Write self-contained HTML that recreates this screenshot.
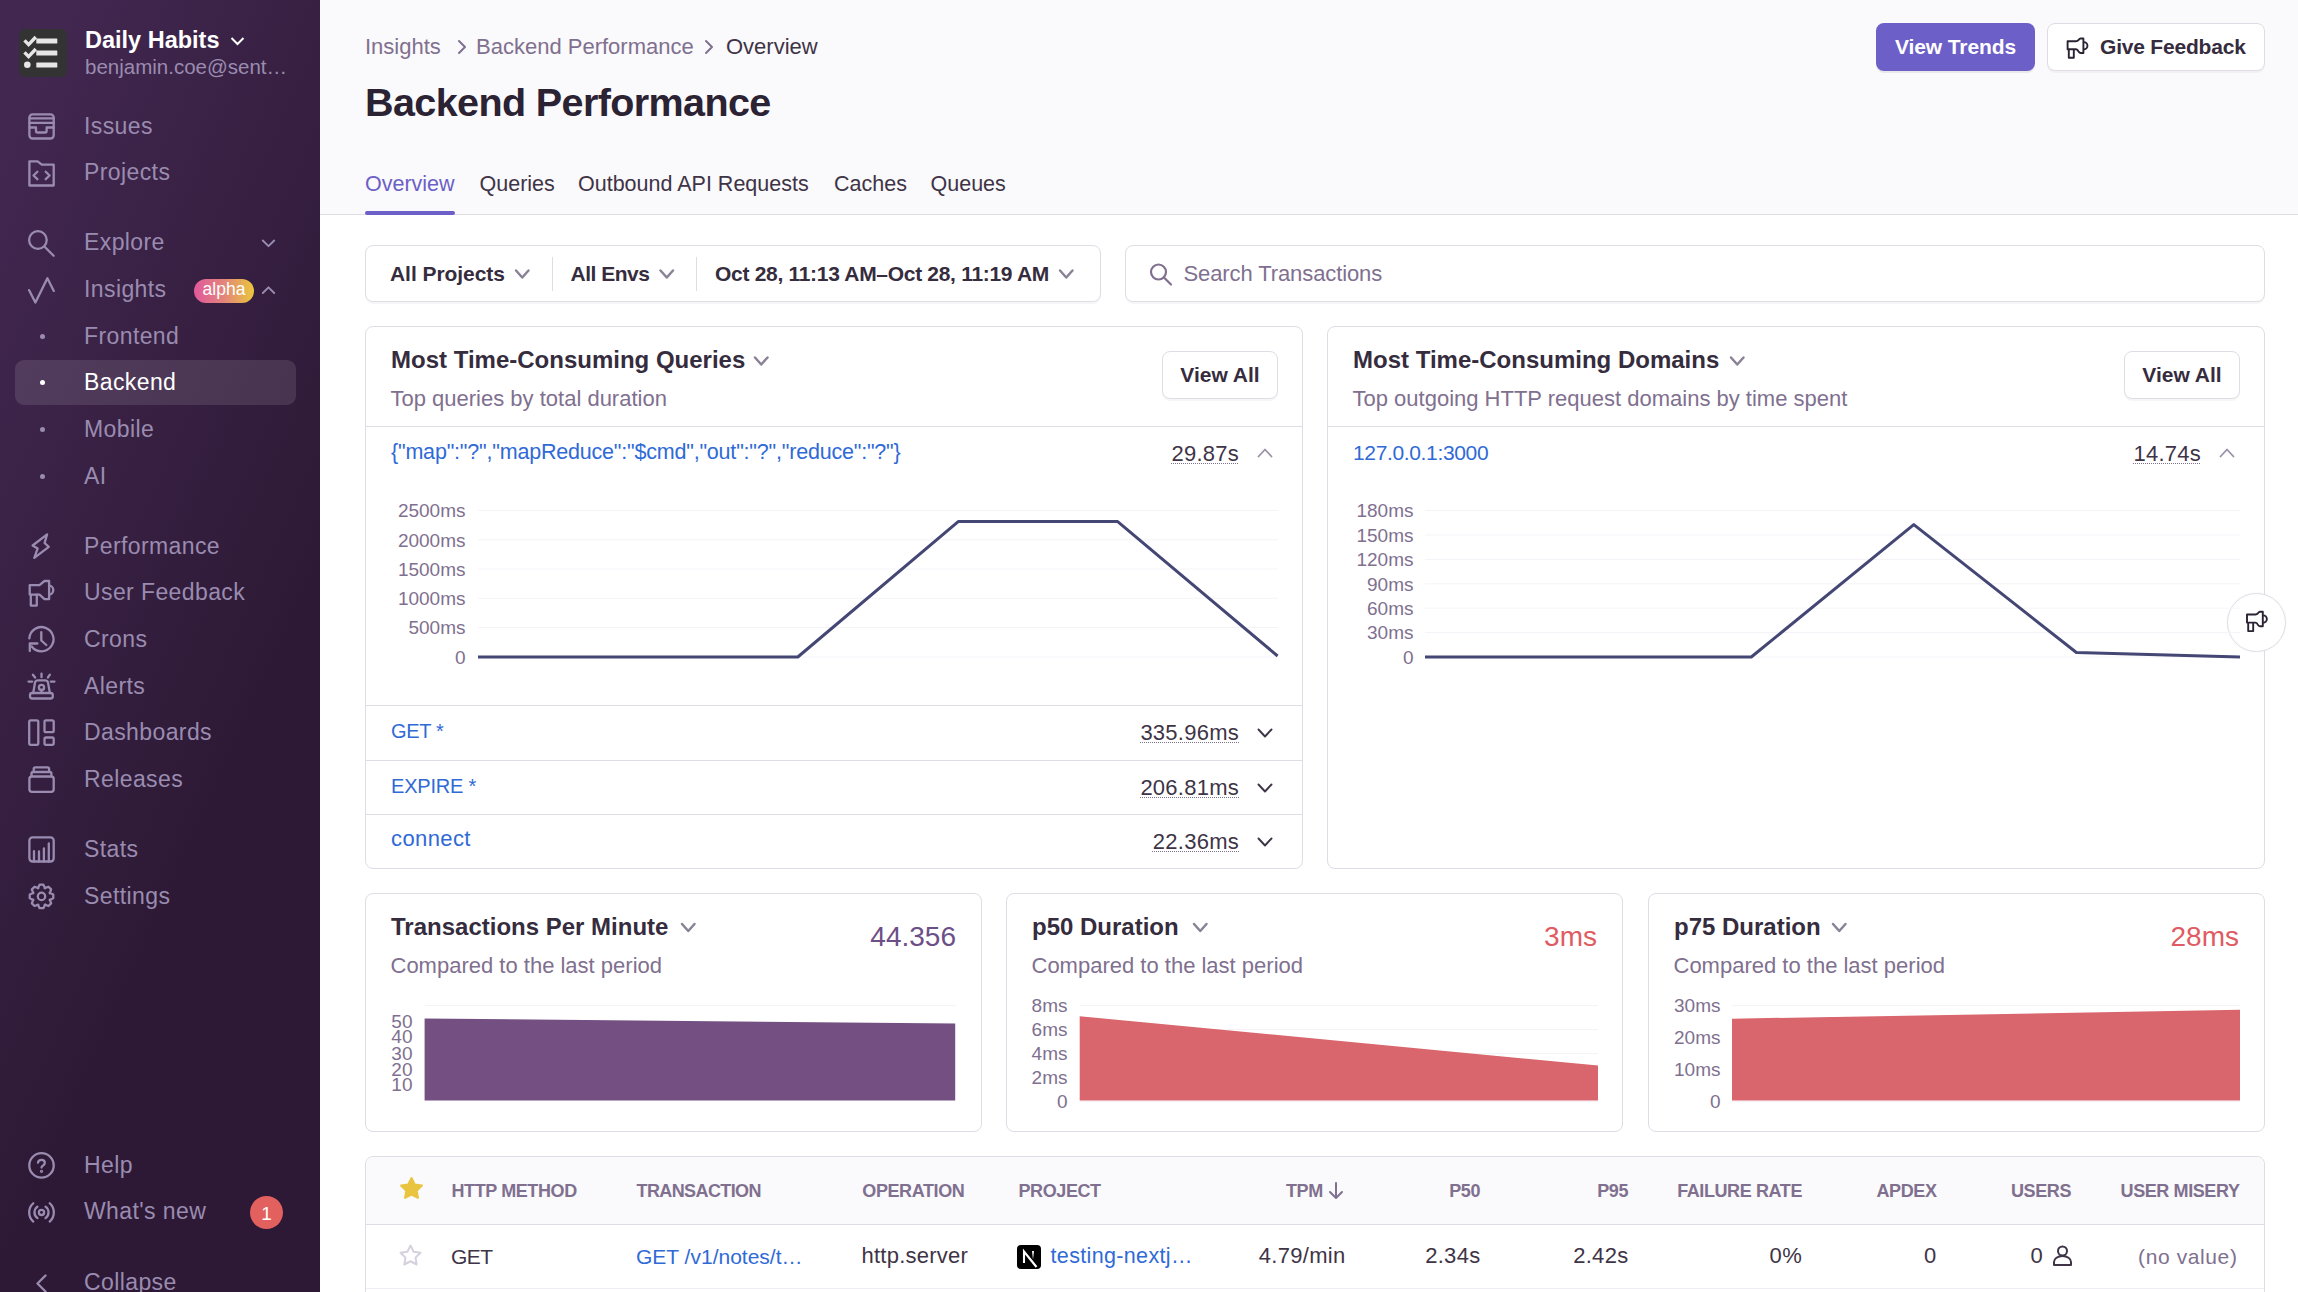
<!DOCTYPE html><html><head><meta charset="utf-8"><style>
html,body{margin:0;padding:0;}
body{width:2298px;height:1292px;overflow:hidden;position:relative;background:#fff;font-family:"Liberation Sans",sans-serif;}
.t{position:absolute;line-height:1;white-space:nowrap;}
</style></head><body>
<div style="position:absolute;left:0px;top:0px;width:320px;height:1292px;background:linear-gradient(294.17deg,#2d1935 35.57%,#422750 92.42%,#422750 92.42%);"></div>
<svg style="position:absolute;left:19px;top:29px" width="48" height="48" viewBox="0 0 48 48">
<rect x="0" y="0" width="48" height="48" rx="6" fill="#333"/>
<path d="M5.5 11.3 L9.6 15.6 L16.8 8" stroke="#e6e6e6" stroke-width="3.4" fill="none" stroke-linecap="butt"/>
<path d="M5.5 23.3 L9.6 27.6 L16.8 20" stroke="#e6e6e6" stroke-width="3.4" fill="none"/>
<circle cx="8.3" cy="35.8" r="3.3" fill="#e6e6e6"/>
<rect x="17.3" y="9.5" width="21" height="5" rx="0.6" fill="#e6e6e6"/>
<rect x="17.3" y="21.5" width="21" height="5" rx="0.6" fill="#e6e6e6"/>
<rect x="17.3" y="33.5" width="21" height="5" rx="0.6" fill="#e6e6e6"/>
</svg>
<div class="t" style="top:29.30px;font-size:23.5px;color:#ffffff;font-weight:700;left:85px;">Daily Habits</div>
<svg style="position:absolute;left:230px;top:36px" width="15" height="10" viewBox="0 0 15 10"><path d="M1.5 2 L7.5 8 L13.5 2" stroke="#fff" stroke-width="2" fill="none"/></svg>
<div class="t" style="top:57.44px;font-size:20.5px;color:#9a8cb0;font-weight:400;left:85px;">benjamin.coe@sent…</div>
<div style="position:absolute;left:15px;top:360px;width:281px;height:45px;background:rgba(255,255,255,0.11);border-radius:9px;"></div>
<div class="t" style="top:114.53px;font-size:23px;color:#9a8cb0;font-weight:400;letter-spacing:0.4px;left:84px;">Issues</div>
<div class="t" style="top:161.20px;font-size:23px;color:#9a8cb0;font-weight:400;letter-spacing:0.4px;left:84px;">Projects</div>
<div class="t" style="top:231.20px;font-size:23px;color:#9a8cb0;font-weight:400;letter-spacing:0.4px;left:84px;">Explore</div>
<div class="t" style="top:277.87px;font-size:23px;color:#9a8cb0;font-weight:400;letter-spacing:0.4px;left:84px;">Insights</div>
<div class="t" style="top:324.54px;font-size:23px;color:#9a8cb0;font-weight:400;letter-spacing:0.4px;left:84px;">Frontend</div>
<div class="t" style="top:371.21px;font-size:23px;color:#ffffff;font-weight:400;letter-spacing:0.4px;left:84px;">Backend</div>
<div class="t" style="top:417.88px;font-size:23px;color:#9a8cb0;font-weight:400;letter-spacing:0.4px;left:84px;">Mobile</div>
<div class="t" style="top:464.55px;font-size:23px;color:#9a8cb0;font-weight:400;letter-spacing:0.4px;left:84px;">AI</div>
<div class="t" style="top:534.55px;font-size:23px;color:#9a8cb0;font-weight:400;letter-spacing:0.4px;left:84px;">Performance</div>
<div class="t" style="top:581.22px;font-size:23px;color:#9a8cb0;font-weight:400;letter-spacing:0.4px;left:84px;">User Feedback</div>
<div class="t" style="top:627.89px;font-size:23px;color:#9a8cb0;font-weight:400;letter-spacing:0.4px;left:84px;">Crons</div>
<div class="t" style="top:674.56px;font-size:23px;color:#9a8cb0;font-weight:400;letter-spacing:0.4px;left:84px;">Alerts</div>
<div class="t" style="top:721.23px;font-size:23px;color:#9a8cb0;font-weight:400;letter-spacing:0.4px;left:84px;">Dashboards</div>
<div class="t" style="top:767.90px;font-size:23px;color:#9a8cb0;font-weight:400;letter-spacing:0.4px;left:84px;">Releases</div>
<div class="t" style="top:837.90px;font-size:23px;color:#9a8cb0;font-weight:400;letter-spacing:0.4px;left:84px;">Stats</div>
<div class="t" style="top:884.57px;font-size:23px;color:#9a8cb0;font-weight:400;letter-spacing:0.4px;left:84px;">Settings</div>
<svg style="position:absolute;left:24px;top:108px;color:#9a8cb0" width="36" height="36" viewBox="0 0 36 36" fill="none" stroke="#9a8cb0" stroke-width="2.3" stroke-linecap="round" stroke-linejoin="round"><rect x="5.4" y="6.3" width="24.3" height="24.2" rx="3.2"/><path d="M5.4 10.3H29.7M5.4 14.8H29.7M5.4 19.5H12V23Q12 24.5 13.5 24.5H21.1Q22.6 24.5 22.6 23V19.5H29.7"/></svg>
<svg style="position:absolute;left:24px;top:155px;color:#9a8cb0" width="36" height="36" viewBox="0 0 36 36" fill="none" stroke="#9a8cb0" stroke-width="2.3" stroke-linecap="round" stroke-linejoin="round"><path d="M5.4 30.5V6.3H13.6L17.8 9.7H29.7V30.5Z"/><path d="M13.4 16.7L9.5 20.5L13.4 24.2M21.7 16.7L25.6 20.5L21.7 24.2"/></svg>
<svg style="position:absolute;left:24px;top:225px;color:#9a8cb0" width="36" height="36" viewBox="0 0 36 36" fill="none" stroke="#9a8cb0" stroke-width="2.3" stroke-linecap="round" stroke-linejoin="round"><circle cx="13.9" cy="15" r="8.8"/><path d="M20.6 21.7L29.6 30.7"/></svg>
<svg style="position:absolute;left:24px;top:272px;color:#9a8cb0" width="36" height="36" viewBox="0 0 36 36" fill="none" stroke="#9a8cb0" stroke-width="2.3" stroke-linecap="round" stroke-linejoin="round"><path d="M5 18.1L11.4 30.6L23.4 6.2L29.8 18.9"/></svg>
<svg style="position:absolute;left:24px;top:528px;color:#9a8cb0" width="36" height="36" viewBox="0 0 36 36" fill="none" stroke="#9a8cb0" stroke-width="2.3" stroke-linecap="round" stroke-linejoin="round"><path d="M23.1 6.4L8.6 17.5L13.6 20.6L10.3 29.8L24.8 18.9L20.6 15Z"/></svg>
<svg style="position:absolute;left:24px;top:575px;color:#9a8cb0" width="36" height="36" viewBox="0 0 36 36" fill="none" stroke="#9a8cb0" stroke-width="2.3" stroke-linecap="round" stroke-linejoin="round"><path d="M5.7 10.2H15.5L20.5 6H25.1V24.2H20.5L15.5 19.6H5.7Z"/><path d="M25.1 10.6A4.2 4.5 0 0 1 25.1 19.6"/><path d="M6.8 19.6V30.6H12.8V19.6"/></svg>
<svg style="position:absolute;left:24px;top:621px;color:#9a8cb0" width="36" height="36" viewBox="0 0 36 36" fill="none" stroke="#9a8cb0" stroke-width="2.3" stroke-linecap="round" stroke-linejoin="round"><path d="M5.33 17.36 A12.1 12.1 0 1 1 7.74 25.48"/><path d="M13.4 22.5H5.8V30M17.3 11.1V19.5L22.3 24"/></svg>
<svg style="position:absolute;left:24px;top:668px;color:#9a8cb0" width="36" height="36" viewBox="0 0 36 36" fill="none" stroke="#9a8cb0" stroke-width="2.3" stroke-linecap="round" stroke-linejoin="round"><rect x="6" y="25" width="22.8" height="5.5" rx="2.2"/><path d="M9.2 25L11 14.6Q11.5 12.3 14 12.3H21Q23.5 12.3 24 14.6L25.9 25"/><circle cx="17.5" cy="19.4" r="2.6"/><path d="M17.5 22V25M17.5 5.6V9.2M8.9 6.7L11.1 9.5M25.9 6.7L23.9 9.5M4.5 13.6H8.2M26.8 13.6H30.5"/></svg>
<svg style="position:absolute;left:24px;top:714px;color:#9a8cb0" width="36" height="36" viewBox="0 0 36 36" fill="none" stroke="#9a8cb0" stroke-width="2.3" stroke-linecap="round" stroke-linejoin="round"><rect x="5.2" y="6.3" width="9.1" height="24.5" rx="1.5"/><rect x="20.5" y="6.3" width="9.2" height="11.9" rx="1.5"/><rect x="20.5" y="23.5" width="9.2" height="7.3" rx="1.5"/></svg>
<svg style="position:absolute;left:24px;top:761px;color:#9a8cb0" width="36" height="36" viewBox="0 0 36 36" fill="none" stroke="#9a8cb0" stroke-width="2.3" stroke-linecap="round" stroke-linejoin="round"><rect x="5.4" y="15.5" width="24.3" height="15.3" rx="2.5"/><path d="M7.5 15.5V12.6Q7.5 11 9.1 11H25.8Q27.4 11 27.4 12.6V15.5M9.7 11V7.9Q9.7 6.3 11.3 6.3H23.5Q25.1 6.3 25.1 7.9V11"/></svg>
<svg style="position:absolute;left:24px;top:831px;color:#9a8cb0" width="36" height="36" viewBox="0 0 36 36" fill="none" stroke="#9a8cb0" stroke-width="2.3" stroke-linecap="round" stroke-linejoin="round"><rect x="5.4" y="6.3" width="24.3" height="24.2" rx="3.2"/><path d="M10 30.5V20.1M15 30.5V20.3M19.9 30.5V17.5M24.8 30.5V12.5"/></svg>
<svg style="position:absolute;left:24px;top:878px;color:#9a8cb0" width="36" height="36" viewBox="0 0 36 36" fill="none" stroke="#9a8cb0" stroke-width="2.3" stroke-linecap="round" stroke-linejoin="round"><path d="M13.88 10.27 L15.64 6.65 L19.36 6.65 L21.12 10.27 L20.69 10.09 L24.49 8.77 L27.13 11.41 L25.81 15.21 L25.63 14.78 L29.25 16.54 L29.25 20.26 L25.63 22.02 L25.81 21.59 L27.13 25.39 L24.49 28.03 L20.69 26.71 L21.12 26.53 L19.36 30.15 L15.64 30.15 L13.88 26.53 L14.31 26.71 L10.51 28.03 L7.87 25.39 L9.19 21.59 L9.37 22.02 L5.75 20.26 L5.75 16.54 L9.37 14.78 L9.19 15.21 L7.87 11.41 L10.51 8.77 L14.31 10.09Z"/><circle cx="17.5" cy="18.4" r="3.7"/></svg>
<div style="position:absolute;left:39.5px;top:333.51px;width:5px;height:5px;background:#9a8cb0;border-radius:50%;"></div>
<div style="position:absolute;left:39.5px;top:380.18px;width:5px;height:5px;background:#fff;border-radius:50%;"></div>
<div style="position:absolute;left:39.5px;top:426.84999999999997px;width:5px;height:5px;background:#9a8cb0;border-radius:50%;"></div>
<div style="position:absolute;left:39.5px;top:473.52px;width:5px;height:5px;background:#9a8cb0;border-radius:50%;"></div>
<div style="position:absolute;left:194px;top:279px;width:60px;height:24px;border-radius:12px;background:linear-gradient(90deg,#e1589c,#e3857a 50%,#eac63c);"></div>
<div class="t" style="top:281.18px;font-size:17.5px;color:#fff;font-weight:400;left:224px;transform:translateX(-50%);">alpha</div>
<svg style="position:absolute;left:261px;top:238px" width="15" height="11" viewBox="0 0 15 11"><path d="M1.8 2.5 L7.5 8.2 L13.2 2.5" stroke="#9a8cb0" stroke-width="1.9" fill="none" stroke-linecap="round" stroke-linejoin="round"/></svg>
<svg style="position:absolute;left:261px;top:284px" width="15" height="11" viewBox="0 0 15 11"><path d="M1.8 9 L7.5 3.3 L13.2 9" stroke="#9a8cb0" stroke-width="1.9" fill="none" stroke-linecap="round" stroke-linejoin="round"/></svg>
<div class="t" style="top:1153.73px;font-size:23px;color:#9a8cb0;font-weight:400;letter-spacing:0.4px;left:84px;">Help</div>
<svg style="position:absolute;left:24px;top:1147px;color:#9a8cb0" width="36" height="36" viewBox="0 0 36 36" fill="none" stroke="#9a8cb0" stroke-width="2.3" stroke-linecap="round" stroke-linejoin="round"><circle cx="17.5" cy="18.4" r="12.2"/><path d="M14 15.6Q14.4 12.9 17.5 12.9Q20.8 12.9 20.8 15.8Q20.8 17.3 19.1 18.5Q17.5 19.5 17.5 20.6"/><circle cx="17.5" cy="24.3" r="0.5" fill="currentColor"/></svg>
<div class="t" style="top:1200.33px;font-size:23px;color:#9a8cb0;font-weight:400;letter-spacing:0.4px;left:84px;">What's new</div>
<svg style="position:absolute;left:24px;top:1194px;color:#9a8cb0" width="36" height="36" viewBox="0 0 36 36" fill="none" stroke="#9a8cb0" stroke-width="2.3" stroke-linecap="round" stroke-linejoin="round"><circle cx="17.5" cy="18.4" r="2.6"/><path d="M13.48 24.13 A7.0 7.0 0 0 1 13.48 12.67 M21.52 12.67 A7.0 7.0 0 0 1 21.52 24.13 M9.27 27.54 A12.3 12.3 0 0 1 9.27 9.26 M25.73 9.26 A12.3 12.3 0 0 1 25.73 27.54"/></svg>
<div class="t" style="top:1270.53px;font-size:23px;color:#9a8cb0;font-weight:400;letter-spacing:0.4px;left:84px;">Collapse</div>
<svg style="position:absolute;left:24px;top:1262px;color:#9a8cb0" width="36" height="36" viewBox="0 0 36 36" fill="none" stroke="#9a8cb0" stroke-width="2.3" stroke-linecap="round" stroke-linejoin="round"><path d="M21.5 13.5L13.5 21.5L21.5 29.5"/></svg>
<div style="position:absolute;left:250px;top:1196px;width:33px;height:33px;background:#e2605e;border-radius:50%;"></div>
<div class="t" style="top:1203.91px;font-size:19px;color:#fff;font-weight:400;left:266.5px;transform:translateX(-50%);">1</div>
<div style="position:absolute;left:320px;top:0px;width:1978px;height:214px;background:#faf9fb;border-bottom:1px solid #e0dce5;"></div>
<div class="t" style="top:36.17px;font-size:22px;color:#80708f;font-weight:400;left:365px;">Insights</div>
<div class="t" style="top:36.17px;font-size:22px;color:#80708f;font-weight:400;left:476px;">Backend Performance</div>
<div class="t" style="top:36.17px;font-size:22px;color:#3e3446;font-weight:400;left:726px;">Overview</div>
<div class="t" style="top:82.86px;font-size:39.5px;color:#2b2233;font-weight:700;letter-spacing:-0.6px;left:365px;">Backend Performance</div>
<div style="position:absolute;left:1876px;top:23px;width:159px;height:48px;background:#6c5fc7;border-radius:8px;box-shadow:0 2px 0 rgba(43,34,51,0.08);box-sizing:border-box;"></div>
<div class="t" style="top:36.42px;font-size:21px;color:#fff;font-weight:700;letter-spacing:-0.1px;left:1955.5px;transform:translateX(-50%);">View Trends</div>
<div style="position:absolute;left:2047px;top:23px;width:218px;height:48px;background:#fff;border:1px solid #e0dce5;border-radius:8px;box-sizing:border-box;box-shadow:0 2px 0 rgba(43,34,51,0.04);"></div>
<div class="t" style="top:36.42px;font-size:21px;color:#352c3d;font-weight:700;letter-spacing:-0.2px;left:2100px;">Give Feedback</div>
<div class="t" style="top:174.20px;font-size:21.5px;color:#6c5fc7;font-weight:400;left:365px;">Overview</div>
<div class="t" style="top:174.20px;font-size:21.5px;color:#3e3446;font-weight:400;left:479.5px;">Queries</div>
<div class="t" style="top:174.20px;font-size:21.5px;color:#3e3446;font-weight:400;left:578px;">Outbound API Requests</div>
<div class="t" style="top:174.20px;font-size:21.5px;color:#3e3446;font-weight:400;left:834px;">Caches</div>
<div class="t" style="top:174.20px;font-size:21.5px;color:#3e3446;font-weight:400;left:930.5px;">Queues</div>
<div style="position:absolute;left:365px;top:211px;width:90px;height:4px;background:#6c5fc7;border-radius:2px;"></div>
<div style="position:absolute;left:365px;top:245px;width:736px;height:57px;background:#fff;border:1px solid #e0dce5;border-radius:8px;box-sizing:border-box;box-shadow:0 2px 0 rgba(43,34,51,0.04);"></div>
<div class="t" style="top:263.32px;font-size:21px;color:#352c3d;font-weight:700;letter-spacing:-0.05px;left:390px;">All Projects</div>
<div style="position:absolute;left:552px;top:257px;width:1px;height:34px;background:#e0dce5;"></div>
<div class="t" style="top:263.32px;font-size:21px;color:#352c3d;font-weight:700;letter-spacing:-0.5px;left:570.5px;">All Envs</div>
<div style="position:absolute;left:696px;top:257px;width:1px;height:34px;background:#e0dce5;"></div>
<div class="t" style="top:263.32px;font-size:21px;color:#352c3d;font-weight:700;letter-spacing:-0.3px;left:715px;">Oct 28, 11:13 AM–Oct 28, 11:19 AM</div>
<div style="position:absolute;left:1125px;top:245px;width:1140px;height:57px;background:#fff;border:1px solid #e0dce5;border-radius:8px;box-sizing:border-box;box-shadow:0 2px 0 rgba(43,34,51,0.04);"></div>
<div class="t" style="top:262.87px;font-size:22px;color:#80708f;font-weight:400;letter-spacing:-0.1px;left:1183.5px;">Search Transactions</div>
<div style="position:absolute;left:365px;top:326px;width:938px;height:543px;background:#fff;border:1px solid #e0dce5;border-radius:8px;box-sizing:border-box;"></div>
<div class="t" style="top:347.68px;font-size:24px;color:#352c3d;font-weight:700;left:391px;">Most Time-Consuming Queries</div>
<div style="position:absolute;left:366px;top:426px;width:936px;height:1px;background:#e0dce5;"></div>
<div class="t" style="top:388.37px;font-size:22px;color:#80708f;font-weight:400;left:390.5px;">Top queries by total duration</div>
<div style="position:absolute;left:1162px;top:351px;width:116px;height:48px;background:#fff;border:1px solid #e0dce5;border-radius:8px;box-sizing:border-box;box-shadow:0 2px 0 rgba(43,34,51,0.04);"></div>
<div class="t" style="top:364.22px;font-size:21px;color:#352c3d;font-weight:700;left:1220px;transform:translateX(-50%);">View All</div>
<div class="t" style="top:441.80px;font-size:21.5px;color:#2f6ad6;font-weight:400;letter-spacing:-0.2px;left:391px;">{"map":"?","mapReduce":"$cmd","out":"?","reduce":"?"}</div>
<div class="t" style="top:443.37px;font-size:22px;color:#3e3446;font-weight:400;letter-spacing:0.25px;right:1059px;text-decoration:underline dotted #80708f;text-underline-offset:2px;text-decoration-thickness:1px;">29.87s</div>
<div style="position:absolute;left:1327px;top:326px;width:938px;height:543px;background:#fff;border:1px solid #e0dce5;border-radius:8px;box-sizing:border-box;"></div>
<div class="t" style="top:347.68px;font-size:24px;color:#352c3d;font-weight:700;left:1353px;">Most Time-Consuming Domains</div>
<div style="position:absolute;left:1328px;top:426px;width:936px;height:1px;background:#e0dce5;"></div>
<div class="t" style="top:388.37px;font-size:22px;color:#80708f;font-weight:400;left:1352.5px;">Top outgoing HTTP request domains by time spent</div>
<div style="position:absolute;left:2124px;top:351px;width:116px;height:48px;background:#fff;border:1px solid #e0dce5;border-radius:8px;box-sizing:border-box;box-shadow:0 2px 0 rgba(43,34,51,0.04);"></div>
<div class="t" style="top:364.22px;font-size:21px;color:#352c3d;font-weight:700;left:2182px;transform:translateX(-50%);">View All</div>
<div class="t" style="top:442.22px;font-size:21px;color:#2f6ad6;font-weight:400;letter-spacing:-0.35px;left:1353px;">127.0.0.1:3000</div>
<div class="t" style="top:443.37px;font-size:22px;color:#3e3446;font-weight:400;letter-spacing:0.25px;right:97px;text-decoration:underline dotted #80708f;text-underline-offset:2px;text-decoration-thickness:1px;">14.74s</div>
<div class="t" style="top:501.41px;font-size:19px;color:#80708f;font-weight:400;right:1832.5px;">2500ms</div>
<div class="t" style="top:530.61px;font-size:19px;color:#80708f;font-weight:400;right:1832.5px;">2000ms</div>
<div class="t" style="top:559.91px;font-size:19px;color:#80708f;font-weight:400;right:1832.5px;">1500ms</div>
<div class="t" style="top:589.21px;font-size:19px;color:#80708f;font-weight:400;right:1832.5px;">1000ms</div>
<div class="t" style="top:618.41px;font-size:19px;color:#80708f;font-weight:400;right:1832.5px;">500ms</div>
<div class="t" style="top:647.91px;font-size:19px;color:#80708f;font-weight:400;right:1832.5px;">0</div>
<div style="position:absolute;left:366px;top:705px;width:936px;height:1px;background:#e0dce5;"></div>
<div class="t" style="top:720.87px;font-size:20px;color:#2f6ad6;font-weight:400;letter-spacing:-0.3px;left:391px;">GET *</div>
<div class="t" style="top:722.17px;font-size:22px;color:#3e3446;font-weight:400;letter-spacing:0.25px;right:1059px;text-decoration:underline dotted #80708f;text-underline-offset:2px;text-decoration-thickness:1px;">335.96ms</div>
<div style="position:absolute;left:366px;top:760px;width:936px;height:1px;background:#e0dce5;"></div>
<div class="t" style="top:775.87px;font-size:20px;color:#2f6ad6;font-weight:400;letter-spacing:-0.2px;left:391px;">EXPIRE *</div>
<div class="t" style="top:777.17px;font-size:22px;color:#3e3446;font-weight:400;letter-spacing:0.25px;right:1059px;text-decoration:underline dotted #80708f;text-underline-offset:2px;text-decoration-thickness:1px;">206.81ms</div>
<div style="position:absolute;left:366px;top:814px;width:936px;height:1px;background:#e0dce5;"></div>
<div class="t" style="top:828.17px;font-size:22px;color:#2f6ad6;font-weight:400;letter-spacing:0.4px;left:391px;">connect</div>
<div class="t" style="top:831.17px;font-size:22px;color:#3e3446;font-weight:400;letter-spacing:0.25px;right:1059px;text-decoration:underline dotted #80708f;text-underline-offset:2px;text-decoration-thickness:1px;">22.36ms</div>
<div class="t" style="top:501.41px;font-size:19px;color:#80708f;font-weight:400;right:884.5px;">180ms</div>
<div class="t" style="top:525.91px;font-size:19px;color:#80708f;font-weight:400;right:884.5px;">150ms</div>
<div class="t" style="top:550.41px;font-size:19px;color:#80708f;font-weight:400;right:884.5px;">120ms</div>
<div class="t" style="top:574.71px;font-size:19px;color:#80708f;font-weight:400;right:884.5px;">90ms</div>
<div class="t" style="top:599.11px;font-size:19px;color:#80708f;font-weight:400;right:884.5px;">60ms</div>
<div class="t" style="top:623.41px;font-size:19px;color:#80708f;font-weight:400;right:884.5px;">30ms</div>
<div class="t" style="top:647.91px;font-size:19px;color:#80708f;font-weight:400;right:884.5px;">0</div>
<div style="position:absolute;left:365px;top:893px;width:617px;height:239px;background:#fff;border:1px solid #e0dce5;border-radius:8px;box-sizing:border-box;"></div>
<div class="t" style="top:914.68px;font-size:24px;color:#352c3d;font-weight:700;left:391px;">Transactions Per Minute</div>
<div class="t" style="top:922.59px;font-size:28px;color:#6d4f88;font-weight:400;right:1342px;">44.356</div>
<div class="t" style="top:954.87px;font-size:22px;color:#80708f;font-weight:400;left:390.5px;">Compared to the last period</div>
<div style="position:absolute;left:1006px;top:893px;width:617px;height:239px;background:#fff;border:1px solid #e0dce5;border-radius:8px;box-sizing:border-box;"></div>
<div class="t" style="top:914.68px;font-size:24px;color:#352c3d;font-weight:700;left:1032px;">p50 Duration</div>
<div class="t" style="top:922.59px;font-size:28px;color:#df5b63;font-weight:400;right:701px;">3ms</div>
<div class="t" style="top:954.87px;font-size:22px;color:#80708f;font-weight:400;left:1031.5px;">Compared to the last period</div>
<div style="position:absolute;left:1648px;top:893px;width:617px;height:239px;background:#fff;border:1px solid #e0dce5;border-radius:8px;box-sizing:border-box;"></div>
<div class="t" style="top:914.68px;font-size:24px;color:#352c3d;font-weight:700;left:1674px;">p75 Duration</div>
<div class="t" style="top:922.59px;font-size:28px;color:#df5b63;font-weight:400;right:59px;">28ms</div>
<div class="t" style="top:954.87px;font-size:22px;color:#80708f;font-weight:400;left:1673.5px;">Compared to the last period</div>
<div class="t" style="top:1011.91px;font-size:19px;color:#80708f;font-weight:400;right:1885.5px;">50</div>
<div class="t" style="top:1027.41px;font-size:19px;color:#80708f;font-weight:400;right:1885.5px;">40</div>
<div class="t" style="top:1043.91px;font-size:19px;color:#80708f;font-weight:400;right:1885.5px;">30</div>
<div class="t" style="top:1059.91px;font-size:19px;color:#80708f;font-weight:400;right:1885.5px;">20</div>
<div class="t" style="top:1075.41px;font-size:19px;color:#80708f;font-weight:400;right:1885.5px;">10</div>
<div class="t" style="top:996.41px;font-size:19px;color:#80708f;font-weight:400;right:1230.5px;">8ms</div>
<div class="t" style="top:1020.41px;font-size:19px;color:#80708f;font-weight:400;right:1230.5px;">6ms</div>
<div class="t" style="top:1044.41px;font-size:19px;color:#80708f;font-weight:400;right:1230.5px;">4ms</div>
<div class="t" style="top:1068.41px;font-size:19px;color:#80708f;font-weight:400;right:1230.5px;">2ms</div>
<div class="t" style="top:1092.41px;font-size:19px;color:#80708f;font-weight:400;right:1230.5px;">0</div>
<div class="t" style="top:996.41px;font-size:19px;color:#80708f;font-weight:400;right:577.5px;">30ms</div>
<div class="t" style="top:1027.91px;font-size:19px;color:#80708f;font-weight:400;right:577.5px;">20ms</div>
<div class="t" style="top:1060.41px;font-size:19px;color:#80708f;font-weight:400;right:577.5px;">10ms</div>
<div class="t" style="top:1092.41px;font-size:19px;color:#80708f;font-weight:400;right:577.5px;">0</div>
<div style="position:absolute;left:365px;top:1156px;width:1900px;height:200px;background:#fff;border:1px solid #e0dce5;border-radius:8px;box-sizing:border-box;"></div>
<div style="position:absolute;left:366px;top:1157px;width:1898px;height:67px;background:#faf9fb;border-radius:8px 8px 0 0;"></div>
<div style="position:absolute;left:366px;top:1224px;width:1898px;height:1px;background:#e0dce5;"></div>
<div style="position:absolute;left:366px;top:1288px;width:1898px;height:1px;background:#f0ecf3;"></div>
<div class="t" style="top:1181.96px;font-size:18px;color:#80708f;font-weight:700;letter-spacing:-0.4px;left:451.5px;">HTTP METHOD</div>
<div class="t" style="top:1181.96px;font-size:18px;color:#80708f;font-weight:700;letter-spacing:-0.6px;left:636.5px;">TRANSACTION</div>
<div class="t" style="top:1181.96px;font-size:18px;color:#80708f;font-weight:700;letter-spacing:-0.4px;left:862.3px;">OPERATION</div>
<div class="t" style="top:1181.96px;font-size:18px;color:#80708f;font-weight:700;letter-spacing:-0.4px;left:1018.5px;">PROJECT</div>
<div class="t" style="top:1181.96px;font-size:18px;color:#80708f;font-weight:700;letter-spacing:-0.4px;left:1286px;">TPM</div>
<div class="t" style="top:1181.96px;font-size:18px;color:#80708f;font-weight:700;letter-spacing:-0.4px;right:818px;">P50</div>
<div class="t" style="top:1181.96px;font-size:18px;color:#80708f;font-weight:700;letter-spacing:-0.4px;right:670px;">P95</div>
<div class="t" style="top:1181.96px;font-size:18px;color:#80708f;font-weight:700;letter-spacing:-0.4px;right:496px;">FAILURE RATE</div>
<div class="t" style="top:1181.96px;font-size:18px;color:#80708f;font-weight:700;letter-spacing:-0.4px;right:361.5px;">APDEX</div>
<div class="t" style="top:1181.96px;font-size:18px;color:#80708f;font-weight:700;letter-spacing:-0.4px;right:227px;">USERS</div>
<div class="t" style="top:1181.96px;font-size:18px;color:#80708f;font-weight:700;letter-spacing:-0.4px;right:58.5px;">USER MISERY</div>
<div class="t" style="top:1246.22px;font-size:21px;color:#3e3446;font-weight:400;letter-spacing:-0.5px;left:451px;">GET</div>
<div class="t" style="top:1246.22px;font-size:21px;color:#2f6ad6;font-weight:400;left:636px;">GET /v1/notes/t…</div>
<div class="t" style="top:1245.37px;font-size:22px;color:#3e3446;font-weight:400;letter-spacing:0.25px;left:861.5px;">http.server</div>
<div style="position:absolute;left:1017px;top:1245px;width:23.5px;height:23.5px;background:#000;border-radius:4px;"></div>
<div class="t" style="top:1245.80px;font-size:21.5px;color:#2f6ad6;font-weight:400;letter-spacing:0.35px;left:1050.5px;">testing-nextj…</div>
<div class="t" style="top:1245.37px;font-size:22px;color:#3e3446;font-weight:400;letter-spacing:0.3px;right:952.5px;">4.79/min</div>
<div class="t" style="top:1245.37px;font-size:22px;color:#3e3446;font-weight:400;letter-spacing:0.3px;right:817.5px;">2.34s</div>
<div class="t" style="top:1245.37px;font-size:22px;color:#3e3446;font-weight:400;letter-spacing:0.3px;right:669.5px;">2.42s</div>
<div class="t" style="top:1245.37px;font-size:22px;color:#3e3446;font-weight:400;letter-spacing:0.3px;right:496px;">0%</div>
<div class="t" style="top:1245.37px;font-size:22px;color:#3e3446;font-weight:400;letter-spacing:0.3px;right:361.5px;">0</div>
<div class="t" style="top:1245.37px;font-size:22px;color:#3e3446;font-weight:400;letter-spacing:0.3px;right:255px;">0</div>
<div class="t" style="top:1246.22px;font-size:21px;color:#80708f;font-weight:400;letter-spacing:0.6px;right:60.5px;">(no value)</div>
<div style="position:absolute;left:2226.5px;top:592.5px;width:59px;height:59px;background:#fff;border:1px solid #e0dce5;border-radius:50%;box-sizing:border-box;box-shadow:0 0 0 1px rgba(43,34,51,0.02);"></div>
<svg style="position:absolute;left:0;top:0" width="2298" height="1292"><path d="M459 41 L465 47 L459 53" stroke="#80708f" stroke-width="2" fill="none" stroke-linecap="round" stroke-linejoin="round"/><path d="M706 41 L712 47 L706 53" stroke="#80708f" stroke-width="2" fill="none" stroke-linecap="round" stroke-linejoin="round"/><g transform="translate(2067.6 38.5)" fill="none" stroke="#2b2233" stroke-width="1.9" stroke-linejoin="round"><path d="M0 2.7H8.4Q10 2.7 11 1.4Q12 0 13 0H15.8V14.5H13Q12 14.5 11 13.2Q10 10.8 8.4 10.8H0Z"/><path d="M16.2 3.6A3.6 3.6 0 0 1 16.2 10.9"/><path d="M1.2 10.8V19.3H6.2V10.8"/></g><path d="M516 270.5 L522.25 277.5 L528.5 270.5" stroke="#8a8296" stroke-width="2.5" fill="none" stroke-linecap="round" stroke-linejoin="round"/><path d="M660.5 270.5 L666.75 277.5 L673.0 270.5" stroke="#8a8296" stroke-width="2.5" fill="none" stroke-linecap="round" stroke-linejoin="round"/><path d="M1060 270.5 L1066.25 277.5 L1072.5 270.5" stroke="#8a8296" stroke-width="2.5" fill="none" stroke-linecap="round" stroke-linejoin="round"/><circle cx="1158.5" cy="272" r="7.5" stroke="#80708f" stroke-width="2.2" fill="none"/><path d="M1164 277.5 L1171 284.5" stroke="#80708f" stroke-width="2.2" stroke-linecap="round"/><path d="M1258.5 456.5 L1265.0 449.5 L1271.5 456.5" stroke="#9a90a8" stroke-width="1.8" fill="none" stroke-linecap="round" stroke-linejoin="round"/><path d="M2220.5 456.5 L2227.0 449.5 L2233.5 456.5" stroke="#9a90a8" stroke-width="1.8" fill="none" stroke-linecap="round" stroke-linejoin="round"/><path d="M755 357.5 L761.25 364.5 L767.5 357.5" stroke="#8a8296" stroke-width="2.5" fill="none" stroke-linecap="round" stroke-linejoin="round"/><path d="M1731 357.5 L1737.25 364.5 L1743.5 357.5" stroke="#8a8296" stroke-width="2.5" fill="none" stroke-linecap="round" stroke-linejoin="round"/><path d="M478 510.5 H1278" stroke="#f5f3f7" stroke-width="1"/><path d="M478 539.7 H1278" stroke="#f5f3f7" stroke-width="1"/><path d="M478 569 H1278" stroke="#f5f3f7" stroke-width="1"/><path d="M478 598.3 H1278" stroke="#f5f3f7" stroke-width="1"/><path d="M478 627.5 H1278" stroke="#f5f3f7" stroke-width="1"/><path d="M478 657 H1278" stroke="#f5f3f7" stroke-width="1"/><path d="M478 657 L797.8 657 L958.2 521.6 L1117.7 521.6 L1277.6 656" stroke="#444674" stroke-width="3" fill="none" stroke-linejoin="round"/><path d="M1258.5 729.5 L1265.0 736.5 L1271.5 729.5" stroke="#3e3446" stroke-width="1.9" fill="none" stroke-linecap="round" stroke-linejoin="round"/><path d="M1258.5 784.5 L1265.0 791.5 L1271.5 784.5" stroke="#3e3446" stroke-width="1.9" fill="none" stroke-linecap="round" stroke-linejoin="round"/><path d="M1258.5 838.5 L1265.0 845.5 L1271.5 838.5" stroke="#3e3446" stroke-width="1.9" fill="none" stroke-linecap="round" stroke-linejoin="round"/><path d="M1425 510.5 H2240" stroke="#f5f3f7" stroke-width="1"/><path d="M1425 535 H2240" stroke="#f5f3f7" stroke-width="1"/><path d="M1425 559.5 H2240" stroke="#f5f3f7" stroke-width="1"/><path d="M1425 583.8 H2240" stroke="#f5f3f7" stroke-width="1"/><path d="M1425 608.2 H2240" stroke="#f5f3f7" stroke-width="1"/><path d="M1425 632.5 H2240" stroke="#f5f3f7" stroke-width="1"/><path d="M1425 657 H2240" stroke="#f5f3f7" stroke-width="1"/><path d="M1425 657 L1751.3 657 L1913.8 524.6 L2076.4 652.5 L2240 657" stroke="#444674" stroke-width="3" fill="none" stroke-linejoin="round"/><path d="M682 924 L688.25 931 L694.5 924" stroke="#8a8296" stroke-width="2.5" fill="none" stroke-linecap="round" stroke-linejoin="round"/><path d="M1194 924 L1200.25 931 L1206.5 924" stroke="#8a8296" stroke-width="2.5" fill="none" stroke-linecap="round" stroke-linejoin="round"/><path d="M1833 924 L1839.25 931 L1845.5 924" stroke="#8a8296" stroke-width="2.5" fill="none" stroke-linecap="round" stroke-linejoin="round"/><path d="M425 1005.5 H956" stroke="#f5f3f7" stroke-width="1"/><path d="M424.6 1018.5 L955.2 1023.5 L955.2 1100.5 L424.6 1100.5 Z" fill="#744f82"/><path d="M1080 1005.5 H1598" stroke="#f5f3f7" stroke-width="1"/><path d="M1080 1029.5 H1598" stroke="#f5f3f7" stroke-width="1"/><path d="M1080 1053.5 H1598" stroke="#f5f3f7" stroke-width="1"/><path d="M1080 1077.5 H1598" stroke="#f5f3f7" stroke-width="1"/><path d="M1080 1101.5 H1598" stroke="#f5f3f7" stroke-width="1"/><path d="M1079.7 1016.3 L1598 1065.5 L1598 1100.5 L1079.7 1100.5 Z" fill="#d9666d"/><path d="M1732 1005.5 H2240" stroke="#f5f3f7" stroke-width="1"/><path d="M1732 1037 H2240" stroke="#f5f3f7" stroke-width="1"/><path d="M1732 1069.5 H2240" stroke="#f5f3f7" stroke-width="1"/><path d="M1732 1101.5 H2240" stroke="#f5f3f7" stroke-width="1"/><path d="M1732 1018.7 L2240 1009.8 L2240 1100.5 L1732 1100.5 Z" fill="#d9666d"/><polygon points="411.50,1178.00 414.73,1184.55 421.96,1185.60 416.73,1190.70 417.97,1197.90 411.50,1194.50 405.03,1197.90 406.27,1190.70 401.04,1185.60 408.27,1184.55" fill="#e9c440" stroke="#e9c440" stroke-width="2" stroke-linejoin="round"/><polygon points="410.50,1245.50 413.59,1251.75 420.49,1252.76 415.49,1257.62 416.67,1264.49 410.50,1261.25 404.33,1264.49 405.51,1257.62 400.51,1252.76 407.41,1251.75" fill="none" stroke="#d6d1dd" stroke-width="2" stroke-linejoin="round"/><path d="M1336 1183 V1198 M1330 1192 L1336 1198 L1342 1192" stroke="#80708f" stroke-width="2" fill="none" stroke-linecap="round" stroke-linejoin="round"/><defs><linearGradient id="ng" x1="0" y1="0" x2="0" y2="1"><stop offset="0" stop-color="#fff"/><stop offset="1" stop-color="#fff" stop-opacity="0"/></linearGradient></defs><path d="M1024 1263V1251.5L1036.5 1267" stroke="#fff" stroke-width="2.1" fill="none"/><rect x="1032" y="1251" width="2" height="8.5" fill="url(#ng)"/><circle cx="2062.5" cy="1251" r="4.5" stroke="#3e3446" stroke-width="2" fill="none"/><path d="M2054 1265 V1262 a8.5 6 0 0 1 17 0 V1265 Z" stroke="#3e3446" stroke-width="2" fill="none" stroke-linejoin="round"/><g transform="translate(2247 611.8)" fill="none" stroke="#2b2233" stroke-width="1.9" stroke-linejoin="round"><path d="M0 2.7H8.4Q10 2.7 11 1.4Q12 0 13 0H15.8V14.5H13Q12 14.5 11 13.2Q10 10.8 8.4 10.8H0Z"/><path d="M16.2 3.6A3.6 3.6 0 0 1 16.2 10.9"/><path d="M1.2 10.8V19.3H6.2V10.8"/></g></svg>
</body></html>
